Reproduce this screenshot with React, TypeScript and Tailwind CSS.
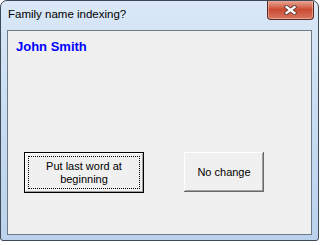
import React from 'react';

const CloseGlyph: React.FC = () => (
  <svg width="13" height="10" viewBox="0 0 13 10">
    <path
      d="M2.5 2 L10.5 8 M10.5 2 L2.5 8"
      stroke="#5a3a36"
      strokeWidth="4"
      strokeLinecap="square"
      fill="none"
    />
    <path
      d="M2.5 2 L10.5 8 M10.5 2 L2.5 8"
      stroke="#ffffff"
      strokeWidth="2.2"
      strokeLinecap="square"
      fill="none"
    />
  </svg>
);

const App: React.FC = () => {
  return (
    <div className="w-[320px] h-[245px] bg-white font-['Liberation_Sans',Arial,sans-serif]">
      <div className="w-[319px] h-[241px] flex flex-col border border-[#3e4a58] rounded-t-[7px] rounded-b-[3px] bg-gradient-to-b from-[#dae8f7] via-[#c8dcf2] to-[#bad2ec] overflow-hidden">
        {/* title bar */}
        <div className="h-[29px] flex items-start justify-between pl-[7px] pr-[4px] shrink-0">
          <span className="mt-[5px] text-[11.5px] leading-[16px] text-black">Family name indexing?</span>
          <div className="w-[47px] h-[20px] -mt-px flex items-center justify-center border border-[#5b2a23] border-t-0 rounded-b-[4px] bg-gradient-to-b from-[#eab0a0] via-[#cb4a32] to-[#d87560] shadow-[inset_0_0_0_1px_rgba(255,220,210,0.45)]">
            <CloseGlyph />
          </div>
        </div>

        {/* client area */}
        <div className="flex-1 px-[6px] pb-[5px]">
          <div className="h-full border border-[#6f7a87] bg-[#f0f0f0] flex flex-col pl-[8px] pt-[8px]">
            <p className="text-[13px] leading-[15px] font-bold text-[#0000ff]">John Smith</p>

            <div className="mt-[98px] ml-[8px] flex items-start gap-[40px] text-[11px] leading-[13px] text-black">
              <button className="w-[120px] h-[41px] border border-black bg-[#f0f0f0] p-0">
                <div className="h-full w-full border border-t-white border-l-white border-r-[#a0a0a0] border-b-[#a0a0a0] p-[2px]">
                  <div className="h-full w-full border border-dotted border-black flex items-center justify-center text-center">
                    Put last word at
                    <br />
                    beginning
                  </div>
                </div>
              </button>
              <button className="w-[80px] h-[40px] bg-[#f0f0f0] flex items-center justify-center shadow-[inset_-1px_-1px_#696969,inset_1px_1px_#ffffff,inset_-2px_-2px_#a0a0a0]">
                No change
              </button>
            </div>
          </div>
        </div>
      </div>
    </div>
  );
};

export default App;
